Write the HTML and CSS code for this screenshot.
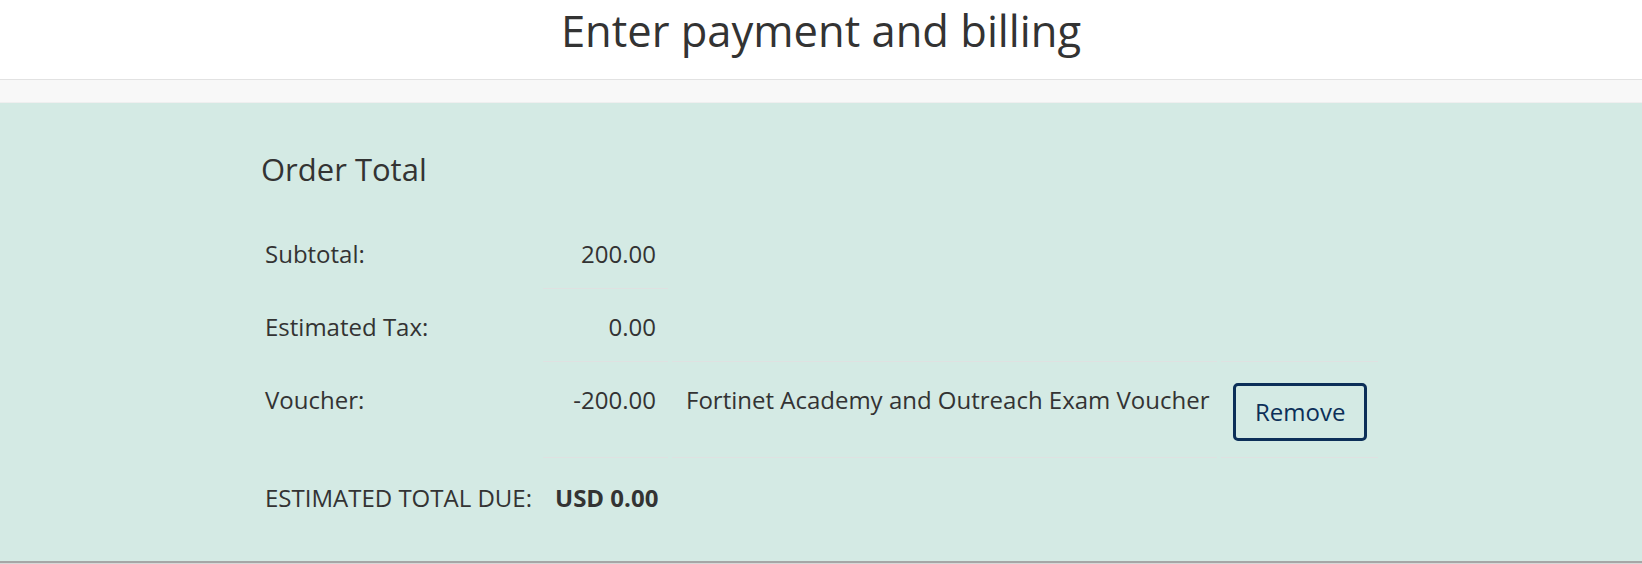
FILE: index.html
```html
<!DOCTYPE html>
<html lang="en">
<head>
<meta charset="utf-8">
<title>Enter payment and billing</title>
<link rel="stylesheet" href="styles.css">
</head>
<body>
<header class="page-header">
  <h1 class="page-title">Enter payment and billing</h1>
</header>
<div class="sub-band"></div>
<section class="order-section">
  <div class="order-container">
    <h3 class="order-heading">Order Total</h3>
    <table class="order-table">
      <colgroup>
        <col class="col-label">
        <col class="col-value">
        <col class="col-desc">
        <col class="col-action">
      </colgroup>
      <tbody>
        <tr class="row-first">
          <th class="cell-label">Subtotal:</th>
          <td class="cell-value">200.00</td>
        </tr>
        <tr>
          <th class="cell-label">Estimated Tax:</th>
          <td class="cell-value">0.00</td>
        </tr>
        <tr>
          <th class="cell-label">Voucher:</th>
          <td class="cell-value">-200.00</td>
          <td class="cell-desc">Fortinet Academy and Outreach Exam Voucher</td>
          <td class="cell-action"><button class="btn-remove" type="button">Remove</button></td>
        </tr>
        <tr class="row-total">
          <th class="cell-label">ESTIMATED TOTAL DUE:</th>
          <td class="cell-value cell-total">USD 0.00</td>
          <td class="cell-desc"></td>
          <td class="cell-action"></td>
        </tr>
      </tbody>
    </table>
  </div>
</section>
<div class="bottom-rule"></div>
</body>
</html>
```
FILE: styles.css
```css
* {
  box-sizing: border-box;
}

html, body {
  margin: 0;
  padding: 0;
  background: #ffffff;
}

body {
  font-family: "Open Sans", "Noto Sans", "Liberation Sans", sans-serif;
  color: #333333;
  font-size: 24px;
}

.page-header {
  height: 80px;
  border-bottom: 1px solid #e2e2e2;
  padding-top: 1px;
  background: #ffffff;
}

.page-title {
  margin: 0;
  text-align: center;
  font-size: 43.5px;
  font-weight: 400;
  line-height: normal;
  color: #333333;
}

.sub-band {
  height: 23px;
  background: #f8f8f8;
  border-bottom: 1px solid #efefef;
}

.order-section {
  background: #d4eae4;
  height: 458px;
  padding-top: 48px;
}

.order-container {
  width: 1136px;
  margin: 0 auto;
}

.order-heading {
  margin: 0 0 29px 0;
  padding-left: 8px;
  font-size: 31px;
  font-weight: 400;
  line-height: 36px;
  color: #333333;
}

.order-table {
  table-layout: fixed;
  width: 1133px;
  margin-left: -4px;
  border-collapse: separate;
  border-spacing: 4px 0;
}

.col-label { width: 286px; }
.col-value { width: 125px; }
.col-desc { width: 545px; }
.col-action { width: 157px; }

.order-table th,
.order-table td {
  padding: 20px 12px 16px 12px;
  line-height: 36px;
  font-size: 24px;
  vertical-align: top;
  text-align: left;
  font-weight: 400;
  color: #333333;
  white-space: nowrap;
}

.order-table td {
  border-top: 1px solid #dfe1e1;
}

.order-table th {
  border-top: 1px solid transparent;
}

.order-table .row-first td,
.order-table .row-first th {
  border-top: 0;
}

.order-table .row-total th,
.order-table .row-total td {
  padding-top: 22px;
  padding-bottom: 14px;
}

.order-table .cell-value {
  text-align: right;
}

.order-table .cell-desc {
  padding-left: 14px;
}

.order-table .cell-total {
  font-weight: 700;
}

.btn-remove {
  display: block;
  margin-top: 1px;
  padding: 8px 19px;
  font-family: "Open Sans", "Noto Sans", "Liberation Sans", sans-serif;
  font-size: 24px;
  line-height: 36px;
  color: #0c2f58;
  background: transparent;
  border: 3px solid #0c2f58;
  border-radius: 5px;
}

.bottom-rule {
  height: 3px;
  border-top: 2px solid #a6a6a6;
  background: #d8d8d8;
}
```
